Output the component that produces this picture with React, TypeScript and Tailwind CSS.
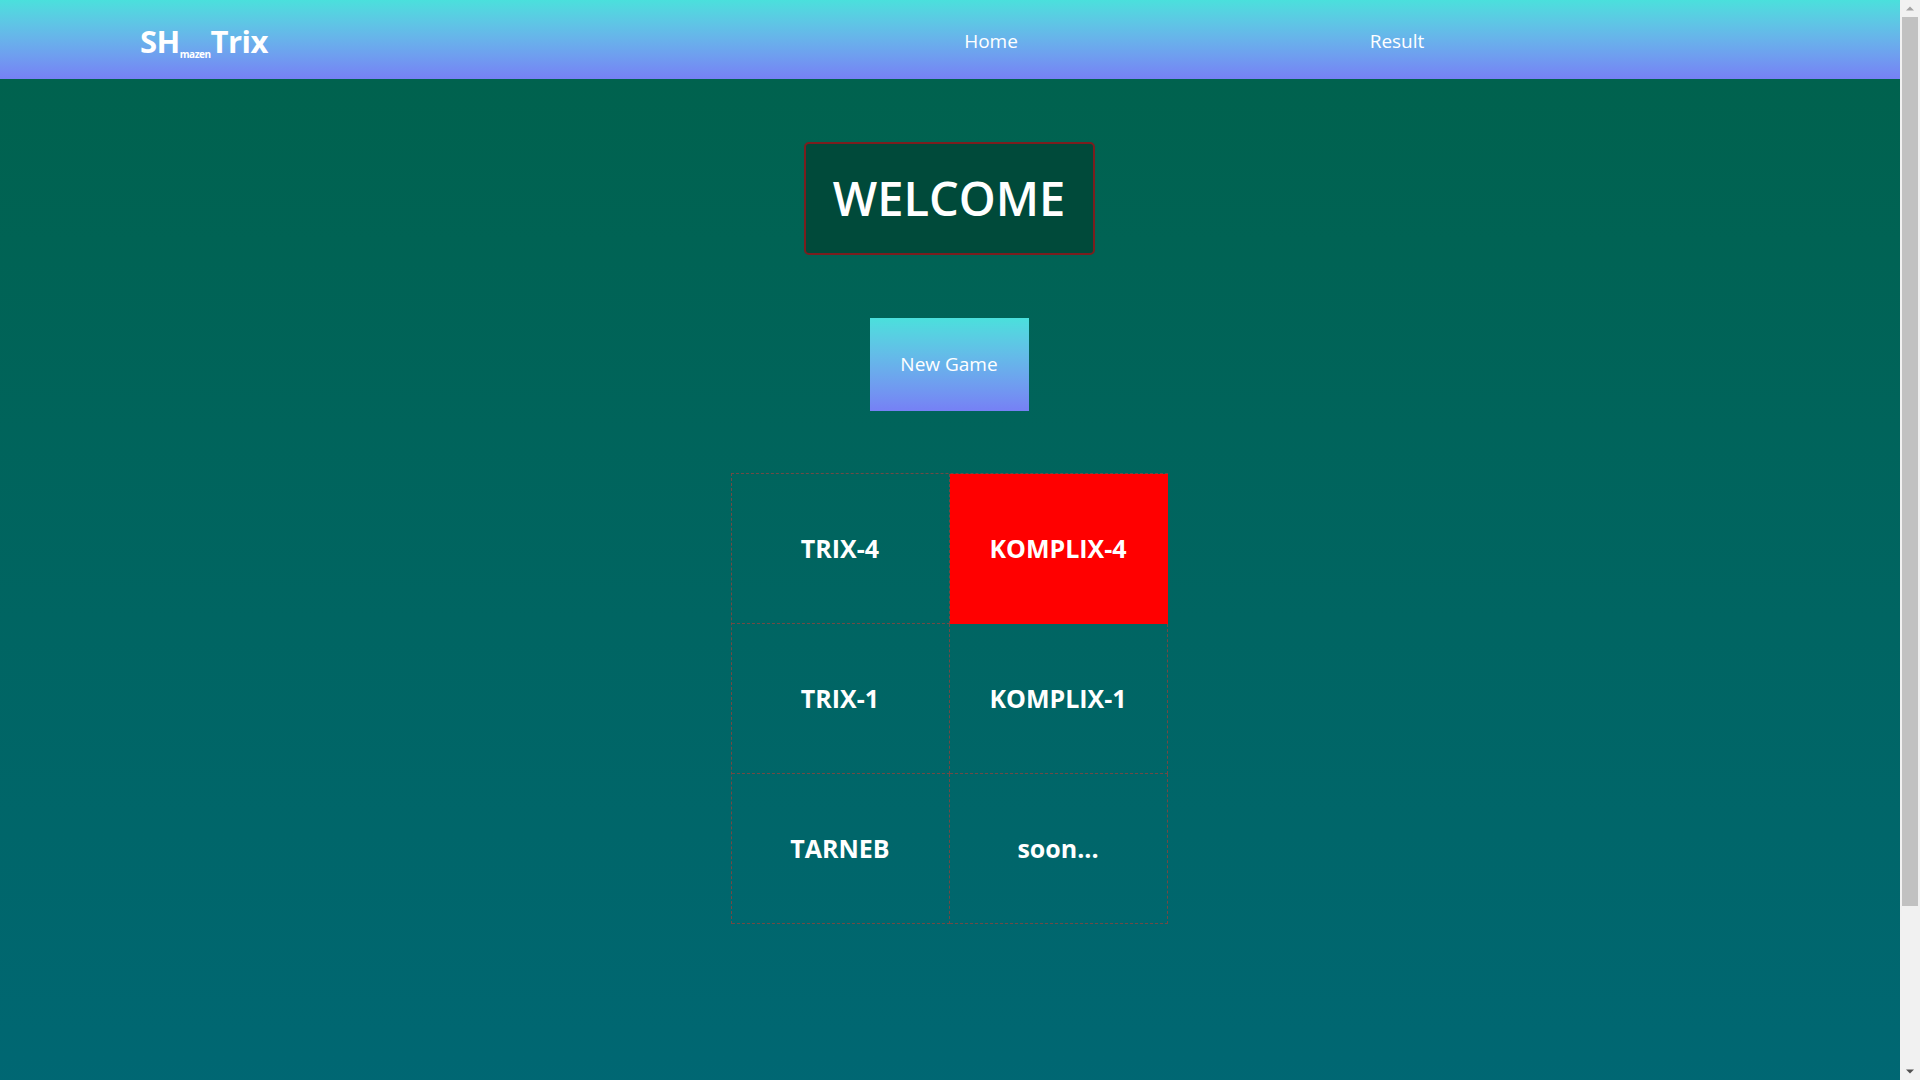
import React from "react";

const games = [
  { name: "TRIX-4", active: false },
  { name: "KOMPLIX-4", active: true },
  { name: "TRIX-1", active: false },
  { name: "KOMPLIX-1", active: false },
  { name: "TARNEB", active: false },
  { name: "soon...", active: false },
];

const font = { fontFamily: '"Open Sans", "Noto Sans", Arial, sans-serif' };

// the browser's classic scrollbar, as seen in the picture
const Scrollbar = () => {
  return (
    <div className="fixed top-0 right-0 w-[20px] h-screen bg-[#f1f1f1] flex flex-col items-center">
      <svg width="20" height="17" viewBox="0 0 20 17" className="shrink-0">
        <path d="M6 10.5 L10 6.5 L14 10.5 Z" fill="#a3a3a3" />
      </svg>
      <div className="w-[16px] h-[889px] bg-[#c1c1c1]" />
      <div className="flex-1" />
      <svg width="20" height="17" viewBox="0 0 20 17" className="shrink-0">
        <path d="M6 6.5 L10 10.5 L14 6.5 Z" fill="#505050" />
      </svg>
    </div>
  );
};

const Navbar = () => {
  return (
    <nav className="h-[79px] bg-gradient-to-b from-[#4ae0dc] to-[#7680f5] flex items-center pt-[3px] text-white">
      <div className="pl-[140px] w-[940px] text-[31px] font-bold leading-none tracking-[-0.5px]">
        SH<sub className="text-[10px] font-bold align-[-3px]">mazen</sub>Trix
      </div>
      <div className="flex items-center text-[19px]">
        <a className="w-[102px] text-center cursor-pointer">Home</a>
        <a className="ml-[304px] w-[102px] text-center cursor-pointer">Result</a>
      </div>
    </nav>
  );
};

const App = () => {
  return (
    <div className="min-h-screen flex flex-col" style={font}>
      <Navbar />
      <main className="flex-1 bg-gradient-to-b from-[#00624e] to-[#00687a] flex flex-col items-center pt-[63px] pb-[354px] pr-[22px]">
        <div className="w-[291px] h-[113px] flex items-center justify-center bg-[#004a3a] border-2 border-[#7a1e1e] rounded-[5px]">
          <h1 className="text-white text-[47px] font-semibold leading-none">WELCOME</h1>
        </div>
        <button className="mt-[63px] w-[159px] h-[93px] bg-gradient-to-b from-[#4ae0dc] to-[#7680f5] text-white text-[19px]">
          New Game
        </button>
        <div className="mt-[62px] grid grid-cols-[218px_218px] grid-rows-[150px_150px_150px] border-l border-t border-dashed border-[#6f4a45]">
          {games.map((g) => (
            <div
              key={g.name}
              className={
                g.active
                  ? "flex items-center justify-center bg-[#ff0000] border-r border-b border-[#ff0000] text-white text-[25px] font-bold cursor-pointer"
                  : "flex items-center justify-center border-r border-b border-dashed border-[#6f4a45] text-white text-[25px] font-bold cursor-pointer"
              }
            >
              {g.name}
            </div>
          ))}
        </div>
      </main>
      <Scrollbar />
    </div>
  );
};

export default App;
